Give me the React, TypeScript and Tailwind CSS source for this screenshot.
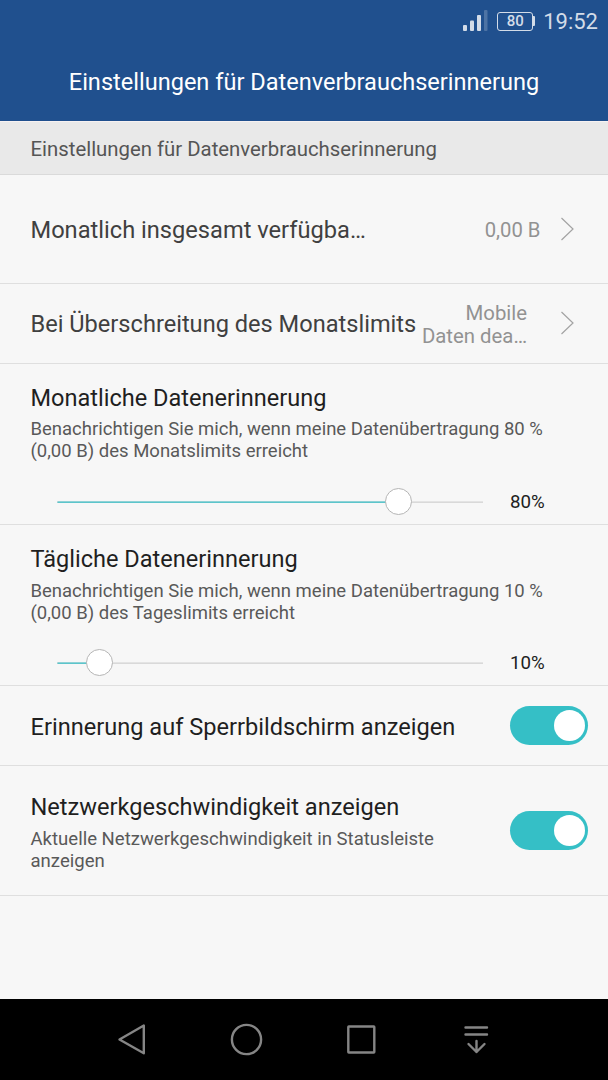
import React from "react";

const StatusBar = () => {
    return (
        <div className="flex h-[42px] items-center justify-end pr-[10px] text-[#d3dce8]">
            <svg width="26" height="22" viewBox="0 0 26 22" fill="currentColor">
                <rect x="1" y="15" width="4" height="6" rx="1" />
                <rect x="8" y="10.500" width="4" height="10.500" rx="1" />
                <rect x="15" y="5" width="4" height="16" rx="1" />
                <rect x="22" y="0" width="3.500" height="21" rx="1" opacity="0.25" />
            </svg>
            <div className="ml-[9px] flex items-center">
                <span className="flex h-[19px] w-[36px] items-center justify-center rounded-[3px] border-[1.5px] border-current text-[15px] leading-none font-medium">80</span>
                <span className="h-[10px] w-[2px] rounded-r-[1px] bg-current"></span>
            </div>
            <span className="ml-[8px] pt-px text-[22px] leading-[26px]">19:52</span>
        </div>
    );
};

const Chevron = () => {
    return (
        <svg className="mb-px" width="14" height="24" viewBox="0 0 14 24" fill="none" stroke="#a3a3a3" strokeWidth="1.2">
            <path d="M1.500 1L13 12L1.500 23" />
        </svg>
    );
};

const Slider = ({ value }: { value: number }) => {
    return (
        <div className="flex h-7 items-center pl-[27px]">
            <div className="relative h-7 w-[426px]">
                <svg className="absolute top-[12.500px] left-0" width="426" height="2" preserveAspectRatio="none">
                    <rect y="0.500" width="426" height="1.300" fill="#d2d2d2" />
                    <rect x="0.500" y="0.500" width={`${value}%`} height="1.300" fill="#3dc0c8" />
                </svg>
                <span
                    className="absolute top-0 -ml-[13.200px] h-[27px] w-[27px] rounded-full border border-[#b5b5b5] bg-white"
                    style={{ left: `${value}%` }}
                ></span>
            </div>
            <span className="ml-[27px] pb-px text-[18.700px] leading-[22px] text-[#212121]">{value}%</span>
        </div>
    );
};

const Toggle = () => {
    return (
        <button className="flex h-[39px] w-[78px] shrink-0 items-center justify-end rounded-full bg-[#35bfc6] pr-[3px]">
            <span className="h-[31px] w-[31px] rounded-full bg-white"></span>
        </button>
    );
};

const NavBar = () => {
    return (
        <div className="flex h-[81px] items-center bg-black">
            <svg width="608" height="81" viewBox="0 0 608 81" fill="none" stroke="#858585" strokeWidth="2.4" strokeLinecap="round" strokeLinejoin="round">
                <path d="M143.800 26.500V54.200L119.500 40.500Z" />
                <circle cx="246.500" cy="40.500" r="14.600" />
                <rect x="348.300" y="27.500" width="26" height="26" rx="0.500" />
                <path d="M465.500 28.500H487M465.500 35.500H487M476.500 42V53M468.500 45L476.500 53L484.500 45" />
            </svg>
        </div>
    );
};

const App = () => {
    return (
        <div className="flex h-[1080px] w-[608px] flex-col bg-[#f7f7f7] font-[Roboto,sans-serif]">
            <header className="h-[121px] bg-[#20508e]">
                <StatusBar />
                <h1 className="pt-[25px] text-center text-[23.550px] leading-[30px] text-white">Einstellungen für Datenverbrauchserinnerung</h1>
            </header>
            <div className="flex h-[54px] items-center border-t border-b border-t-[#f7f2f2] border-b-[#dadada] bg-[#e9e9e9] pt-px pl-[30.500px] text-[20.350px] leading-[24px] text-[#555]">
                Einstellungen für Datenverbrauchserinnerung
            </div>

            {/* limits */}
            <div className="flex h-[109px] items-center border-b border-[#dfdfdf] pr-[34px] pl-[30.500px]">
                <span className="flex-1 pt-px text-[23.650px] leading-[30px] text-[#404040]">Monatlich insgesamt verfügba…</span>
                <span className="mr-[19.500px] pt-[2px] text-[20.250px] text-[#929292]">0,00 B</span>
                <Chevron />
            </div>
            <div className="flex h-[80px] items-center border-b border-[#dfdfdf] pr-[34px] pl-[30.500px]">
                <span className="flex-1 pt-px text-[23.600px] leading-[30px] whitespace-nowrap text-[#404040]">Bei Überschreitung des Monatslimits</span>
                <span className="mr-[33px] pt-[2px] text-right text-[20.350px] leading-[23px] whitespace-nowrap text-[#929292]">
                    Mobile<br />Daten dea…
                </span>
                <Chevron />
            </div>

            {/* reminders */}
            <div className="h-[161px] border-b border-[#dfdfdf] pt-[19px] pl-[30px]">
                <h2 className="pl-[0.500px] text-[23.550px] leading-[30px] text-[#1f1f1f]">Monatliche Datenerinnerung</h2>
                <p className="mt-[5px] mb-[26px] pl-[0.500px] text-[18.500px] leading-[22px] text-[#595959]">
                    Benachrichtigen Sie mich, wenn meine Datenübertragung 80 %<br />(0,00 B) des Monatslimits erreicht
                </p>
                <Slider value={80} />
            </div>
            <div className="h-[161px] border-b border-[#dfdfdf] pt-[19px] pl-[30px]">
                <h2 className="pl-[0.500px] text-[23.550px] leading-[30px] text-[#1f1f1f]">Tägliche Datenerinnerung</h2>
                <p className="mt-[6px] mb-[25px] pl-[0.500px] text-[18.500px] leading-[22px] text-[#595959]">
                    Benachrichtigen Sie mich, wenn meine Datenübertragung 10 %<br />(0,00 B) des Tageslimits erreicht
                </p>
                <Slider value={10} />
            </div>

            {/* switches */}
            <div className="flex h-[80px] items-center justify-between border-b border-[#dfdfdf] pr-5 pl-[30.500px]">
                <span className="pt-[3px] text-[23.600px] leading-[30px] text-[#1f1f1f]">Erinnerung auf Sperrbildschirm anzeigen</span>
                <Toggle />
            </div>
            <div className="flex h-[130px] items-center justify-between border-b border-[#dfdfdf] pr-5 pl-[30.500px]">
                <div className="pt-[3px]">
                    <h2 className="text-[23.600px] leading-[30px] text-[#1f1f1f]">Netzwerkgeschwindigkeit anzeigen</h2>
                    <p className="mt-[6px] text-[18.560px] leading-[22px] text-[#595959]">
                        Aktuelle Netzwerkgeschwindigkeit in Statusleiste<br />anzeigen
                    </p>
                </div>
                <Toggle />
            </div>
            <div className="flex-1"></div>
            <NavBar />
        </div>
    );
};

export default App;
